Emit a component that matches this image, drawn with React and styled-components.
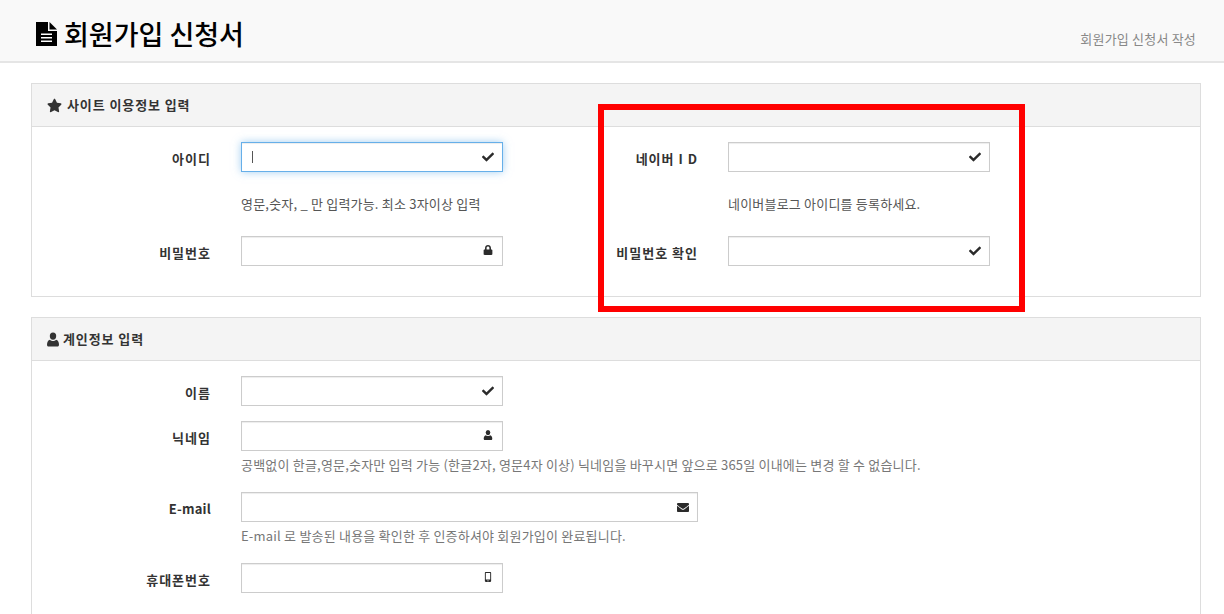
import React from "react";
import styled, { createGlobalStyle } from "styled-components";
import { FaCheck, FaEnvelope, FaLock, FaMobileAlt, FaStar } from "react-icons/fa";

const GlobalStyle = createGlobalStyle`
  html, body {
    margin: 0;
    padding: 0;
    height: 614px;
    overflow: hidden;
    background: #fff;
  }
  body {
    font-family: "Noto Sans CJK KR", "Liberation Sans", sans-serif;
    font-size: 13px;
    color: #333;
  }
`;

const Page = styled.div`
  position: relative;
  width: 1224px;
  height: 614px;
  overflow: hidden;
`;

const PageHeader = styled.header`
  display: flex;
  justify-content: space-between;
  align-items: flex-start;
  height: 61px;
  padding: 0 28px 0 36px;
  background: #f9f9f9;
  border-bottom: 2px solid #e5e5e5;
`;

const PageTitle = styled.h1`
  display: flex;
  align-items: center;
  gap: 7px;
  margin: 17px 0 0;
  font-size: 27px;
  line-height: 34px;
  font-weight: 500;
  color: #000;
`;

const PageDesc = styled.span`
  margin-top: 30px;
  font-size: 13px;
  line-height: 18px;
  letter-spacing: 0.2px;
  color: #888;
`;

const Content = styled.main`
  display: flex;
  flex-direction: column;
  gap: 20px;
  padding: 20px 23px 0 31px;
`;

const Panel = styled.section`
  border: 1px solid #ddd;
  flex-shrink: 0;
`;

const PanelHead = styled.div`
  display: flex;
  align-items: center;
  gap: ${(p) => p.$gap || 5}px;
  height: 42px;
  padding-left: 15px;
  background: #f4f4f4;
  border-bottom: 1px solid #ddd;
  font-size: 13px;
  line-height: 38px;
  font-weight: 700;
  letter-spacing: 0.9px;
  color: #333;
  svg {
    width: ${(p) => p.$iconWidth || 15}px;
    height: 15px;
  }
`;

const PanelBody = styled.div`
  display: grid;
  grid-template-columns: 487px 1fr;
  padding: 15px 0 ${(p) => p.$bottom}px;
`;

const Column = styled.div`
  display: flex;
  flex-direction: column;
`;

const Field = styled.div`
  display: flex;
  margin-bottom: ${(p) => p.$after || 0}px;
`;

const Label = styled.label`
  flex: none;
  width: 179px;
  margin-right: 30px;
  padding-top: 7px;
  text-align: right;
  font-size: 13px;
  line-height: 20px;
  font-weight: 700;
  letter-spacing: ${(p) => (p.$latin ? 0.2 : 1)}px;
  color: #333;
  white-space: nowrap;
`;

const InputBox = styled.div`
  position: relative;
  flex: none;
  box-sizing: border-box;
  width: ${(p) => p.$width || 262}px;
  height: 30px;
  background: #fff;
  border: 1px solid ${(p) => (p.$focused ? "#66afe9" : "#ccc")};
  box-shadow: ${(p) =>
    p.$focused
      ? "inset 0 1px 1px rgba(0,0,0,.075), 0 0 8px rgba(102,175,233,.6)"
      : "inset 0 1px 1px rgba(0,0,0,.075)"};
`;

const TextInput = styled.input`
  display: block;
  box-sizing: border-box;
  width: 100%;
  height: 100%;
  padding: 0 30px 0 10px;
  border: 0;
  outline: 0;
  background: transparent;
  font: inherit;
`;

const Caret = styled.span`
  position: absolute;
  left: 10px;
  top: 8px;
  width: 1px;
  height: 12px;
  background: #555;
`;

const InputIcon = styled.span`
  position: absolute;
  right: 8px;
  top: 8px;
  display: flex;
  justify-content: center;
  width: 12px;
  color: #2b2b2b;
  svg {
    width: ${(p) => p.$size || 12}px;
    height: ${(p) => p.$size || 12}px;
  }
`;

const Help = styled.p`
  margin: ${(p) => p.$top}px 0 ${(p) => p.$bottom}px 209px;
  font-size: 13px;
  line-height: 20px;
  letter-spacing: 0.2px;
  color: ${(p) => p.$color || "#555"};
  white-space: nowrap;
`;

const Highlight = styled.div`
  position: absolute;
  left: 598px;
  top: 104px;
  box-sizing: border-box;
  width: 427px;
  height: 208px;
  border: 6px solid #f00;
  pointer-events: none;
`;

const DocIcon = () => (
  <svg width="21" height="24" viewBox="0 0 21 24" aria-hidden="true">
    <path d="M0 0h12v9h9v15H0z" fill="#000" />
    <path d="M13.5 0L21 7.5h-7.5z" fill="#000" />
    <path d="M5 11.5h11v1.4H5zM5 15h11v1.4H5zM5 18.5h11v1.4H5z" fill="#fff" />
  </svg>
);

// head and shoulders, taller and narrower than the icon package's user
const UserIcon = () => (
  <svg viewBox="0 0 12 14" fill="currentColor" aria-hidden="true">
    <ellipse cx="6" cy="3.6" rx="3.2" ry="3.6" />
    <path d="M0 12.2C0 9.5 1 7.6 3 7.2 4 8.2 5 8.5 6 8.5s2-.3 3-1.3c2 .4 3 2.3 3 5 0 1.1-.7 1.8-1.5 1.8h-9C.7 14 0 13.3 0 12.2z" />
  </svg>
);

const FormField = ({ label, icon, width, size, focused, after, latin }) => (
  <Field $after={after}>
    <Label $latin={latin}>{label}</Label>
    <InputBox $width={width} $focused={focused}>
      <TextInput readOnly aria-label={label} />
      {focused && <Caret />}
      <InputIcon $size={size}>{icon}</InputIcon>
    </InputBox>
  </Field>
);

export default function App() {
  return (
    <Page>
      <GlobalStyle />
      <PageHeader>
        <PageTitle>
          <DocIcon />
          회원가입 신청서
        </PageTitle>
        <PageDesc>회원가입 신청서 작성</PageDesc>
      </PageHeader>
      <Content>
        <Panel>
          <PanelHead>
            <FaStar />
            사이트 이용정보 입력
          </PanelHead>
          <PanelBody $bottom={30}>
            <Column>
              <FormField label="아이디" icon={<FaCheck />} focused />
              <Help $top={22} $bottom={22}>영문,숫자, _ 만 입력가능. 최소 3자이상 입력</Help>
              <FormField label="비밀번호" icon={<FaLock />} size={10} />
            </Column>
            <Column>
              <FormField label="네이버 I D" icon={<FaCheck />} />
              <Help $top={22} $bottom={22}>네이버블로그 아이디를 등록하세요.</Help>
              <FormField label="비밀번호 확인" icon={<FaCheck />} />
            </Column>
          </PanelBody>
        </Panel>
        <Panel>
          <PanelHead $gap={4} $iconWidth={12}>
            <UserIcon />
            계인정보 입력
          </PanelHead>
          <PanelBody $bottom={60}>
            <Column>
              <FormField label="이름" icon={<FaCheck />} after={15} />
              <FormField label="닉네임" icon={<UserIcon />} size={10} />
              <Help $top={4} $bottom={17} $color="#777">
                공백없이 한글,영문,숫자만 입력 가능 (한글2자, 영문4자 이상) 닉네임을 바꾸시면 앞으로 365일 이내에는 변경 할 수 없습니다.
              </Help>
              <FormField label="E-mail" latin icon={<FaEnvelope />} width={457} size={13} />
              <Help $top={4} $bottom={17} $color="#777">
                E-mail 로 발송된 내용을 확인한 후 인증하셔야 회원가입이 완료됩니다.
              </Help>
              <FormField label="휴대폰번호" icon={<FaMobileAlt />} size={10} />
            </Column>
          </PanelBody>
        </Panel>
      </Content>
      <Highlight />
    </Page>
  );
}
